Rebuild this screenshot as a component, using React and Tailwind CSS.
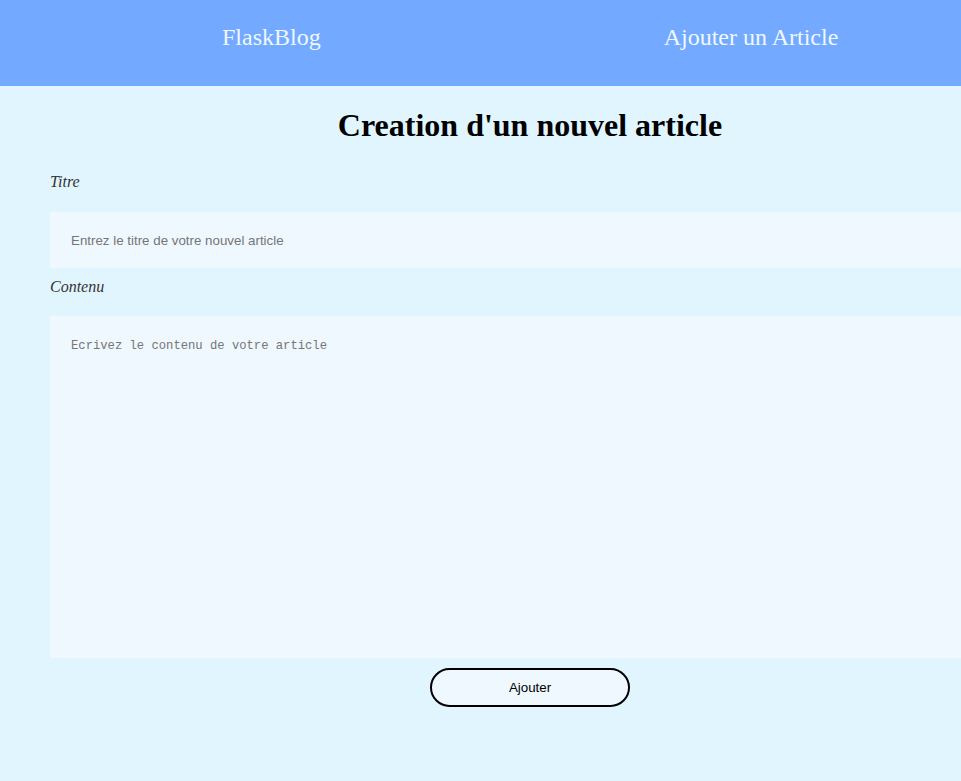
import React from "react";

const App = () => {
  return (
    <div className="min-h-screen w-full overflow-hidden bg-[#e1f5fe] font-['Liberation_Serif',serif]">
      {/* header */}
      <header className="h-[86px] bg-[#73a9ff] flex items-start pt-[24px] pl-[222px]">
        <a href="#" className="text-[24px] leading-[27px] text-[#f0f8ff]">FlaskBlog</a>
        <a href="#" className="ml-[343px] text-[24px] leading-[27px] text-[#f0f8ff]">Ajouter un Article</a>
      </header>

      {/* form */}
      <main className="ml-[50px] w-[960px]">
        <h1 className="mt-[21px] text-center text-[32px] leading-[37px] font-bold text-black">
          Creation d'un nouvel article
        </h1>

        <form className="flex flex-col">
          <label className="mt-[29px] block italic text-[16px] leading-[18px] text-[#333]">Titre</label>
          <input
            type="text"
            placeholder="Entrez le titre de votre nouvel article"
            className="mt-[21px] h-[56px] w-full bg-[#f0f8ff] px-[21px] font-['Liberation_Sans',Arial,sans-serif] text-[13.33px] text-black outline-none placeholder:text-[#757575]"
          />

          <label className="mt-[10px] block italic text-[16px] leading-[18px] text-[#333]">Contenu</label>
          <textarea
            placeholder="Ecrivez le contenu de votre article"
            className="mt-[20px] h-[342px] w-full resize-none bg-[#f0f8ff] px-[21px] pt-[23px] font-['Liberation_Mono',monospace] text-[12.2px] leading-[15px] text-black outline-none placeholder:text-[#757575]"
          />

          <div className="mt-[10px] flex justify-center">
            <button
              type="button"
              className="h-[39px] w-[200px] rounded-full border-2 border-black bg-[#f0f8ff] font-['Liberation_Sans',Arial,sans-serif] text-[13.33px] text-black"
            >
              Ajouter
            </button>
          </div>
        </form>
      </main>
    </div>
  );
};

export default App;
